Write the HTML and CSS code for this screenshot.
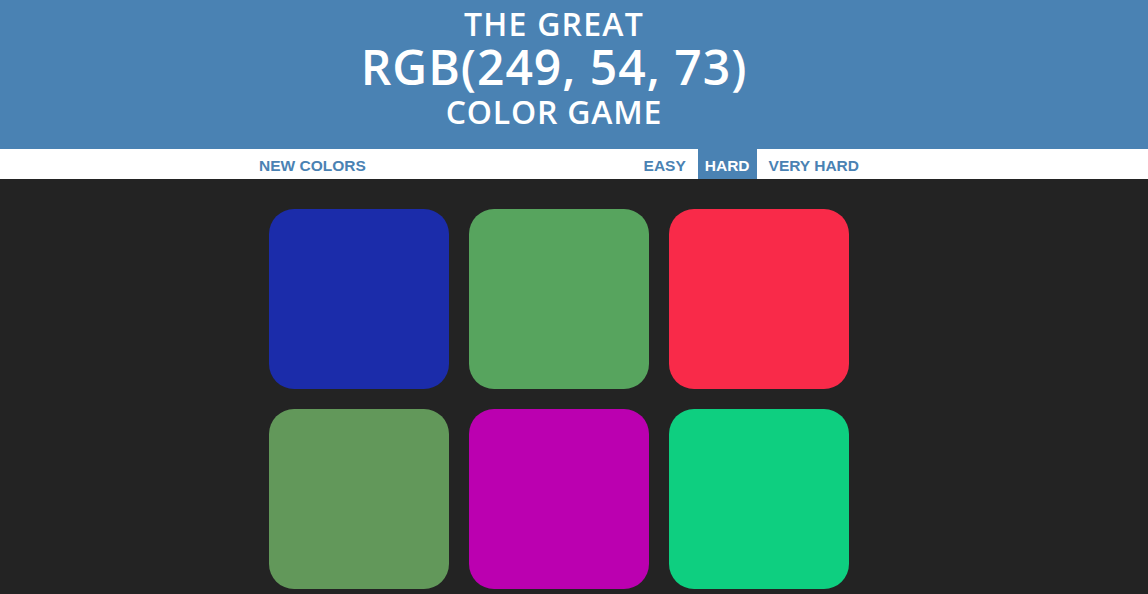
FILE: index.html
```html
<!DOCTYPE html>
<html lang="en">
<head>
<meta charset="utf-8">
<title>The Great RGB Color Game</title>
<link rel="stylesheet" href="styles.css">
</head>
<body>
<header class="header">
  <h1 class="title">
    <span class="title-top">THE GREAT</span>
    <span class="title-rgb">RGB(249, 54, 73)</span>
    <span class="title-bottom">COLOR GAME</span>
  </h1>
</header>
<nav class="stripe">
  <div class="stripe-inner">
    <button class="btn">NEW COLORS</button>
    <span class="message"></span>
    <div class="modes">
      <button class="btn">EASY</button>
      <button class="btn selected">HARD</button>
      <button class="btn">VERY HARD</button>
    </div>
  </div>
</nav>
<main class="board">
  <div class="grid">
    <div class="square sq-blue"></div>
    <div class="square sq-green"></div>
    <div class="square sq-red"></div>
    <div class="square sq-olive"></div>
    <div class="square sq-magenta"></div>
    <div class="square sq-mint"></div>
  </div>
</main>
</body>
</html>
```
FILE: styles.css
```css
* { box-sizing: border-box; }
html, body { margin: 0; padding: 0; }
body {
  background: #232323;
  font-family: "Open Sans", "DejaVu Sans", sans-serif;
  height: 594px;
  overflow: hidden;
}
.header {
  background: #4a82b3;
  height: 149px;
  padding-right: 40px;
  display: flex;
  justify-content: center;
}
.title {
  margin: 0;
  color: #fff;
  font-weight: 600;
  display: flex;
  flex-direction: column;
  align-items: center;
  text-align: center;
  padding-top: 5px;
}
.title-top { font-size: 32px; line-height: 38px; letter-spacing: 1.2px; }
.title-rgb { font-size: 48px; line-height: 48px; letter-spacing: 1px; }
.title-bottom { font-size: 32px; line-height: 38px; letter-spacing: 0.8px; padding-top: 2px; }

.stripe {
  background: #fff;
  height: 30px;
  padding-right: 30px;
  display: flex;
  justify-content: center;
}
.stripe-inner {
  width: 614px;
  display: flex;
  justify-content: space-between;
  align-items: stretch;
}
.modes { display: flex; gap: 5px; }
.btn {
  display: block;
  border: none;
  background: none;
  color: #4a82b3;
  font-family: "Liberation Sans", Arial, sans-serif;
  font-weight: 700;
  font-size: 15.5px;
  line-height: 18px;
  padding: 4px 7px 0;
  height: 30px;
  margin: 0;
}
.btn.selected { background: #4a82b3; color: #fff; }

.board {
  padding: 30px 30px 0 0;
  display: flex;
  justify-content: center;
}
.grid {
  display: grid;
  grid-template-columns: repeat(3, 180px);
  grid-auto-rows: 180px;
  gap: 20px;
}
.square { border-radius: 25px; }
.sq-blue { background: #1b2caa; }
.sq-green { background: #57a45e; }
.sq-red { background: #f92a49; }
.sq-olive { background: #62985a; }
.sq-magenta { background: #bb00b0; }
.sq-mint { background: #0ecf80; }
```
